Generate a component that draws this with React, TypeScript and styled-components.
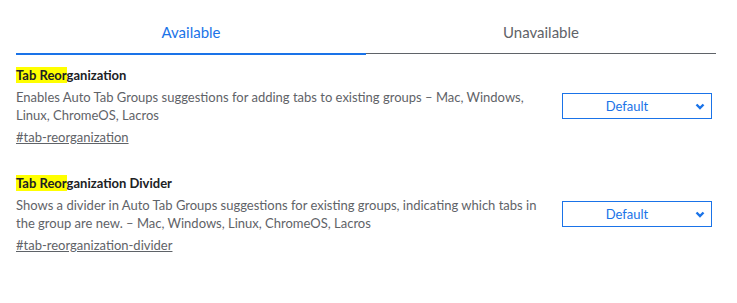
import styled, { createGlobalStyle } from 'styled-components';

const GlobalStyle = createGlobalStyle`
	body {
		margin: 0;
		background: #fff;
		font-family: Lato, 'Liberation Sans', sans-serif;
		color: #202124;
	}
`;

const Page = styled.div`
	width: 700px;
	margin-left: 16px;
`;

const TabBar = styled.div`
	display: flex;
	align-items: flex-start;
`;

const Tab = styled.div<{ $active?: boolean }>`
	flex: 1;
	box-sizing: border-box;
	height: ${ p => p.$active ? '55px' : '54px' };
	padding-top: 20px;
	text-align: center;
	font-size: 15px;
	line-height: 24px;
	color: ${ p => p.$active ? '#1a73e8' : '#5f6368' };
	border-bottom: ${ p => p.$active ? '2px solid #1a73e8' : '1px solid #5f6368' };
`;

const List = styled.div`
	display: flex;
	flex-direction: column;
	gap: 28px;
	padding-top: 11px;
`;

const Experiment = styled.div`
	display: flex;
	align-items: center;
`;

const Info = styled.div`
	flex: 1;
	min-width: 0;
	padding-right: 16px;
`;

const Name = styled.div`
	font-size: 13px;
	font-weight: 700;
	line-height: 18px;
	color: #202124;
`;

const Match = styled.mark`
	background: #ffff00;
	color: inherit;
`;

const Description = styled.p`
	margin: 4px 0 0;
	font-size: 13px;
	line-height: 18px;
	color: #5f6368;
`;

const Permalink = styled.a`
	display: inline-block;
	margin-top: 4px;
	font-size: 13px;
	line-height: 18px;
	color: #5f6368;
	text-decoration: underline;
`;

const Actions = styled.div`
	flex: 0 0 auto;
	padding-right: 4px;
`;

const Select = styled.div`
	position: relative;
	box-sizing: border-box;
	width: 150px;
	height: 26px;
	border: 1px solid #1a73e8;
	padding-right: 20px;
	text-align: center;
	font-size: 13px;
	line-height: 24px;
	color: #1a73e8;
`;

const Chevron = styled.svg`
	position: absolute;
	right: 6px;
	top: 9px;
`;

const experiments = [
	{
		rest: 'ganization',
		description: 'Enables Auto Tab Groups suggestions for adding tabs to existing groups – Mac, Windows, Linux, ChromeOS, Lacros',
		link: '#tab-reorganization',
	},
	{
		rest: 'ganization Divider',
		description: 'Shows a divider in Auto Tab Groups suggestions for existing groups, indicating which tabs in the group are new. – Mac, Windows, Linux, ChromeOS, Lacros',
		link: '#tab-reorganization-divider',
	},
];

const App = () => (
	<>
		<GlobalStyle />
		<Page>
			<TabBar>
				<Tab $active>Available</Tab>
				<Tab>Unavailable</Tab>
			</TabBar>
			<List>
				{ experiments.map(exp => (
					<Experiment key={ exp.link }>
						<Info>
							<Name><Match>Tab Reor</Match>{ exp.rest }</Name>
							<Description>{ exp.description }</Description>
							<Permalink href={ exp.link }>{ exp.link }</Permalink>
						</Info>
						<Actions>
							<Select>
								Default
								<Chevron width='10' height='7' viewBox='0 0 10 7'>
									<polyline points='1.5,1.5 5,5 8.5,1.5' fill='none' stroke='#1a73e8' strokeWidth='2.4' />
								</Chevron>
							</Select>
						</Actions>
					</Experiment>
				)) }
			</List>
		</Page>
	</>
);

export default App;
